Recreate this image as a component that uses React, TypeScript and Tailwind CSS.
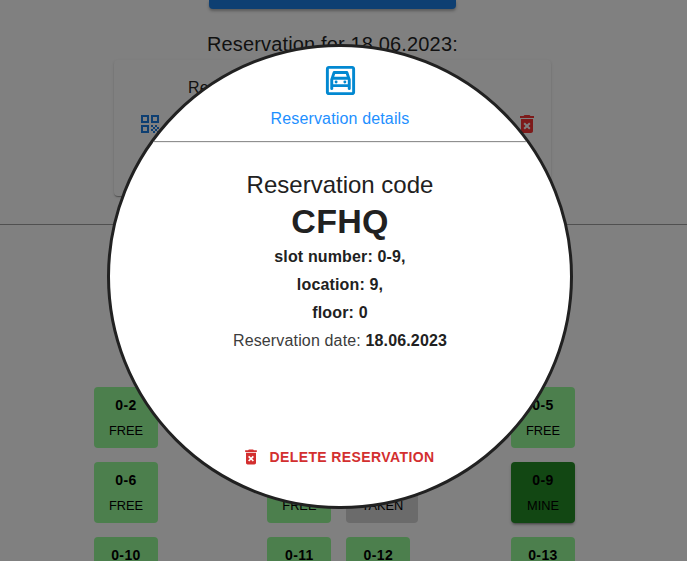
import React from 'react';
import { MdDeleteForever, MdOutlineGarage, MdQrCode } from 'react-icons/md';

type SlotState = 'FREE' | 'MINE' | 'TAKEN';

const tone: Record<SlotState, string> = {
  FREE: 'w-16 bg-[#4c7f4d]',
  MINE: 'w-16 bg-[#124713] shadow-[0_3px_2px_-2px_rgba(0,0,0,0.3),0_2px_3px_rgba(0,0,0,0.2)]',
  TAKEN: 'w-[72px] bg-[#6b6b6b]',
};

function Slot({ name, state = 'FREE', compact = false }: { name: string; state?: SlotState; compact?: boolean }) {
  return (
    <div className={`flex h-[61px] shrink-0 flex-col items-center rounded-[4px] pt-[6px] text-black ${tone[state]}`}>
      <div className="text-[14px] leading-[25px] font-bold tracking-[0.4px]">{name}</div>
      {!compact && <div className="text-[12.8px] leading-[25px]">{state}</div>}
    </div>
  );
}

function SlotRow({ left, middle, right }: { left: React.ReactNode; middle?: React.ReactNode; right: React.ReactNode }) {
  return (
    <div className="grid grid-cols-[173.4px_243.6px_64px]">
      <div>{left}</div>
      <div className="flex gap-[15px]">{middle}</div>
      <div>{right}</div>
    </div>
  );
}

export default function App() {
  return (
    <div className="relative h-[561px] w-[687px] overflow-hidden bg-[#808080] font-['Liberation_Sans',Arial,sans-serif]">
      <div className="flex flex-col">
        <div className="ml-[209px] h-[9px] w-[247px] rounded-b-[4px] bg-[#0e3f72] shadow-[0_2px_3px_rgba(0,0,0,0.3)]" />
        <h1 className="mt-[20px] ml-[207px] text-[20px] leading-[30px] tracking-[0.15px] whitespace-nowrap text-[#111]">Reservation for 18.06.2023:</h1>
        <section className="mt-[1px] ml-[114px] h-[136px] w-[437px] rounded-[4px] px-[24px] pt-[16px] shadow-[0_2px_1px_-1px_rgba(0,0,0,0.2),0_1px_1px_rgba(0,0,0,0.14),0_1px_3px_rgba(0,0,0,0.12)]">
          <p className="pl-[50px] text-[16px] leading-[23px] tracking-[0.15px] text-[#111]">Reservation code</p>
          <div className="mt-[13px] flex items-center justify-between">
            <MdQrCode className="size-6 text-[#0e3f72]" />
            <MdDeleteForever className="mr-[-12px] size-6 text-[#7d1a1a]" />
          </div>
        </section>
        <div className="mt-[28px] h-px bg-[#505050]" />
        <main className="mt-[162px] ml-[94px] flex flex-col gap-[14px]">
          <SlotRow left={<Slot name="0-2" />} right={<Slot name="0-5" />} />
          <SlotRow
            left={<Slot name="0-6" />}
            middle={<><Slot name="0-7" /><Slot name="0-8" state="TAKEN" /></>}
            right={<Slot name="0-9" state="MINE" />}
          />
          <SlotRow
            left={<Slot name="0-10" compact />}
            middle={<><Slot name="0-11" compact /><Slot name="0-12" compact /></>}
            right={<Slot name="0-13" compact />}
          />
        </main>
      </div>

      <div className="absolute top-[44px] left-[107px] flex h-[465px] w-[466px] flex-col items-center overflow-hidden rounded-full border-3 border-[#212121] bg-white text-[#212121]">
        <MdOutlineGarage className="mt-[16px] size-[35px] shrink-0 text-[#0288d1]" />
        <h2 className="mt-[9px] text-[16px] leading-[24px] tracking-[0.15px] text-[#1e90ff]">Reservation details</h2>
        <div className="mt-[10px] h-[2px] w-full shrink-0 border-t border-[#909090] bg-[#eeeeee]" />
        <p className="mt-[26px] text-[24px] leading-[32px]">Reservation code</p>
        <p className="text-[34px] leading-[41px] font-bold tracking-[0.25px]">CFHQ</p>
        <div className="mt-px text-center text-[16px] leading-[28px] tracking-[0.15px]">
          <p className="font-bold">slot number: 0-9,</p>
          <p className="font-bold">location: 9,</p>
          <p className="font-bold">floor: 0</p>
          <p><span className="text-[#3c3c3c]">Reservation date: </span><b>18.06.2023</b></p>
        </div>
        <button className="mt-[90px] mr-[4px] flex h-[24px] items-center gap-[8px] text-[14px] font-bold tracking-[0.4px] text-[#d32f2f]">
          <MdDeleteForever className="size-5" />
          DELETE RESERVATION
        </button>
      </div>
    </div>
  );
}
